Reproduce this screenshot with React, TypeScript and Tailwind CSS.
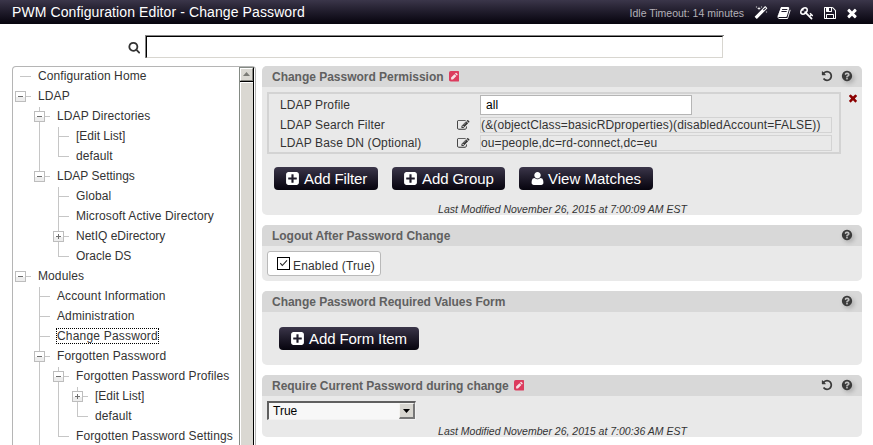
import type { ReactNode } from 'react';

const PATHS = {
  times:
    'M1490 1322q0 40-28 68l-136 136q-28 28-68 28t-68-28l-294-294-294 294q-28 28-68 28t-68-28l-136-136q-28-28-28-68t28-68l294-294-294-294q-28-28-28-68t28-68l136-136q28-28 68-28t68 28l294 294 294-294q28-28 68-28t68 28l136 136q28 28 28 68t-28 68l-294 294 294 294q28 28 28 68z',
  search:
    'M1216 832q0-185-131.5-316.5t-316.5-131.5-316.5 131.5-131.5 316.5 131.5 316.5 316.5 131.5 316.5-131.5 131.5-316.5zm512 832q0 52-38 90t-90 38q-54 0-90-38l-343-342q-179 124-399 124-143 0-273.5-55.5t-225-150-150-225-55.5-273.5 55.5-273.5 150-225 225-150 273.5-55.5 273.5 55.5 225 150 150 225 55.5 273.5q0 220-124 399l343 343q37 37 37 90z',
  help:
    'M1024 1376v-192q0-14-9-23t-23-9h-192q-14 0-23 9t-9 23v192q0 14 9 23t23 9h192q14 0 23-9t9-23zm256-672q0-88-55.5-163t-138.5-116-170-41q-243 0-371 213-15 24 8 42l132 100q7 6 19 6 16 0 25-12 53-68 86-92 34-24 86-24 48 0 85.5 26t37.5 59q0 38-20 61t-68 45q-63 28-115.5 86.5t-52.5 125.5v36q0 14 9 23t23 9h192q14 0 23-9t9-23q0-19 21.5-49.5t54.5-49.5q32-18 49-28.5t46-35 44.5-48 28-60.5 12.5-81zm384 192q0 209-103 385.5t-279.5 279.5-385.5 103-385.5-103-279.5-279.5-103-385.5 103-385.5 279.5-279.5 385.5-103 385.5 103 279.5 279.5 103 385.5z',
  plus:
    'M1408 960v-128q0-26-19-45t-45-19h-320v-320q0-26-19-45t-45-19h-128q-26 0-45 19t-19 45v320h-320q-26 0-45 19t-19 45v128q0 26 19 45t45 19h320v320q0 26 19 45t45 19h128q26 0 45-19t19-45v-320h320q26 0 45-19t19-45zm256-544v960q0 119-84.5 203.5t-203.5 84.5h-960q-119 0-203.5-84.5t-84.5-203.5v-960q0-119 84.5-203.5t203.5-84.5h960q119 0 203.5 84.5t84.5 203.5z',
  user:
    'M1600 1405q0 120-73 189.5t-194 69.5h-874q-121 0-194-69.5t-73-189.5q0-53 3.5-103.5t14-109 26.5-108.5 43-97.5 62-81 85.5-53.5 111.5-20q9 0 42 21.5t74.5 48 108 48 133.5 21.5 133.5-21.5 108-48 74.5-48 42-21.5q61 0 111.5 20t85.5 53.5 62 81 43 97.5 26.5 108.5 14 109 3.5 103.5zm-320-893q0 159-112.5 271.5t-271.5 112.5-271.5-112.5-112.5-271.5 112.5-271.5 271.5-112.5 271.5 112.5 112.5 271.5z',
  undo:
    'M1664 896q0 156-61 298t-164 245-245 164-298 61q-172 0-327-72.5t-264-204.5q-7-10-6.5-22.5t8.5-20.5l137-138q10-9 25-9 16 2 23 12 73 95 179 147t225 52q104 0 198.5-40.5t163.5-109.5 109.5-163.5 40.5-198.5-40.5-198.5-109.5-163.5-163.5-109.5-198.5-40.5q-98 0-188 35.5t-160 101.5l137 138q31 30 14 69-17 40-59 40h-448q-26 0-45-19t-19-45v-448q0-42 40-59 39-17 69 14l130 129q107-101 244.5-156.5t284.5-55.5q156 0 298 61t245 164 164 245 61 298z',
  save:
    'M512 1536h768v-384h-768v384zm896 0h128v-896q0-14-10-38.5t-20-34.5l-281-281q-10-10-34-20t-39-10v416q0 40-28 68t-68 28h-576q-40 0-68-28t-28-68v-416h-128v1280h128v-416q0-40 28-68t68-28h832q40 0 68 28t28 68v416zm-384-928v-320q0-13-9.5-22.5t-22.5-9.5h-192q-13 0-22.5 9.5t-9.5 22.5v320q0 13 9.5 22.5t22.5 9.5h192q13 0 22.5-9.5t9.5-22.5zm640 32v928q0 40-28 68t-68 28h-1344q-40 0-68-28t-28-68v-1344q0-40 28-68t68-28h928q40 0 88 20t76 48l280 280q28 28 48 76t20 88z',
  edit:
    'M888 1184l116-116-152-152-116 116v56h96v96h56zm440-720q-16-16-33 1l-350 350q-17 17-1 33t33-1l350-350q17-17 1-33zm80 594v190q0 119-84.5 203.5t-203.5 84.5h-832q-119 0-203.5-84.5t-84.5-203.5v-832q0-119 84.5-203.5t203.5-84.5h832q63 0 117 25 15 7 18 23 3 17-9 29l-49 49q-14 14-32 8-23-6-45-6h-832q-66 0-113 47t-47 113v832q0 66 47 113t113 47h832q66 0 113-47t47-113v-126q0-13 9-22l64-64q15-15 35-7t20 29zm-96-738l288 288-672 672h-288v-288zm444 132l-92 92-288-288 92-92q28-28 68-28t68 28l152 152q28 28 28 68t-28 68z',
  book:
    'M1703 478q40 57 18 129l-275 906q-19 64-76.5 107.5t-122.5 43.5h-923q-77 0-148.5-53.5t-99.5-131.5q-24-67-2-127 0-4 3-27t4-37q1-8-3-21.5t-3-19.5q2-11 8-21t16.5-23.5 16.5-23.5q23-38 45-91.5t30-91.5q3-10 .5-30t-.5-28q3-11 17-28t17-23q21-36 42-92t25-90q1-9-2.5-32t.5-28q4-13 22-30.5t22-22.5q19-26 42.5-84.5t27.5-96.5q1-8-3-25.5t-2-26.5q2-8 9-18t18-23 17-21q8-12 16.5-30.5t15-35 16-36 19.5-32 26.5-23.5 36-11.5 47.5 5.5l-1 3q38-9 51-9h761q74 0 114 56t18 130l-274 906q-36 119-71.5 153.5t-128.5 34.5h-869q-27 0-38 15-11 16-1 43 24 70 144 70h923q29 0 56-15.5t35-41.5l300-987q7-22 5-57 38 15 59 43zm-1064 2q-4 13 2 22.5t20 9.5h608q13 0 25.5-9.5t16.5-22.5l21-64q4-13-2-22.5t-20-9.5h-608q-13 0-25.5 9.5t-16.5 22.5zm-83 256q-4 13 2 22.5t20 9.5h608q13 0 25.5-9.5t16.5-22.5l21-64q4-13-2-22.5t-20-9.5h-608q-13 0-25.5 9.5t-16.5 22.5z',
  magic:
    'M1254 581l293-293-107-107-293 293zm447-293q0 27-18 45l-1286 1286q-18 18-45 18t-45-18l-198-198q-18-18-18-45t18-45l1286-1286q18-18 45-18t45 18l198 198q18 18 18 45zm-1351-190l98 30-98 30-30 98-30-98-98-30 98-30 30-98zm350 162l196 60-196 60-60 196-60-196-196-60 196-60 60-196zm930 478l98 30-98 30-30 98-30-98-98-30 98-30 30-98zm-640-640l98 30-98 30-30 98-30-98-98-30 98-30 30-98z',
  key:
    'M832 512q0-80-56-136t-136-56-136 56-56 136q0 42 19 83-41-19-83-19-80 0-136 56t-56 136 56 136 136 56 136-56 56-136q0-42-19-83 41 19 83 19 80 0 136-56t56-136zm851 704q0 17-49 66t-66 49q-9 0-28.5-16t-36.5-33-38.5-40-24.5-26l-96 96 220 220q28 28 28 68 0 42-39 81t-81 39q-40 0-68-28l-671-671q-176 131-365 131-163 0-265.5-102.5t-102.5-265.5q0-160 95-313t248-248 313-95q163 0 265.5 102.5t102.5 265.5q0 189-131 365l355 355 96-96q-3-3-26-24.5t-40-38.5-33-36.5-16-28.5q0-17 49-66t66-49q13 0 23 10 6 6 46 44.5t82 79.5 86.5 86 73 78 28.5 41z',
};

function Icon({ name, className }: { name: keyof typeof PATHS; className: string }) {
  return (
    <svg viewBox="0 0 1792 1792" fill="currentColor" className={`shrink-0 ${className}`}>
      <path d={PATHS[name]} />
    </svg>
  );
}

/** Red rounded square with a light pencil: the setting differs from its default. */
function ModifiedIcon() {
  return (
    <svg viewBox="0 0 10 10" className="ml-[5px] size-[10.5px] shrink-0">
      <rect width="10" height="10" rx="1.6" fill="#dc3c5e" />
      <path d="M2 8V6.2L5.2 3 7 4.8 3.8 8zM5.7 2.5l.6-.6q.4-.3.8 0l1 1q.3.4 0 .8l-.6.6z" fill="#f6dfe4" />
    </svg>
  );
}

type Node = { label: string; guides: string; box?: '+' | '-'; selected?: boolean; tight?: boolean };

// guides, one letter per level: "|" passing line, "T" branch, "L" last branch, "-" no vertical, " " empty
const TREE: Node[] = [
  { label: 'Configuration Home', guides: '-' },
  { label: 'LDAP', guides: '-', box: '-' },
  { label: 'LDAP Directories', guides: ' T', box: '-' },
  { label: '[Edit List]', guides: ' |T', tight: true },
  { label: 'default', guides: ' |L' },
  { label: 'LDAP Settings', guides: ' L', box: '-', tight: true },
  { label: 'Global', guides: '  T' },
  { label: 'Microsoft Active Directory', guides: '  T' },
  { label: 'NetIQ eDirectory', guides: '  T', box: '+', tight: true },
  { label: 'Oracle DS', guides: '  L', tight: true },
  { label: 'Modules', guides: '-', box: '-' },
  { label: 'Account Information', guides: ' T' },
  { label: 'Administration', guides: ' T' },
  { label: 'Change Password', guides: ' T', selected: true },
  { label: 'Forgotten Password', guides: ' T', box: '-' },
  { label: 'Forgotten Password Profiles', guides: ' |T', box: '-' },
  { label: '[Edit List]', guides: ' ||T', box: '+', tight: true },
  { label: 'default', guides: ' ||L' },
  { label: 'Forgotten Password Settings', guides: ' |L' },
];

function Guide({ kind, box }: { kind: string; box?: '+' | '-' }) {
  return (
    <svg viewBox="0 0 19 20" className="h-5 w-[19px] shrink-0" shapeRendering="crispEdges">
      {(kind === '|' || kind === 'T') && <rect x="7" y="0" width="1" height="20" fill="#c6c6c6" />}
      {kind === 'L' && <rect x="7" y="0" width="1" height="10" fill="#c6c6c6" />}
      {(kind === 'T' || kind === 'L' || kind === '-') && <rect x="7" y="9" width="11" height="1" fill="#c6c6c6" />}
      {box && (
        <g>
          <rect x="2" y="4" width="11" height="11" fill="#bdbdbd" />
          <rect x="3" y="5" width="9" height="9" fill="#ffffff" />
          <rect x="3" y="10" width="9" height="4" fill="#ededed" />
          <rect x="5" y="9" width="5" height="1" fill="#6e6e6e" />
          {box === '+' && <rect x="7" y="7" width="1" height="5" fill="#6e6e6e" />}
        </g>
      )}
    </svg>
  );
}

function TreeRow({ node }: { node: Node }) {
  const levels = node.guides.split('');
  return (
    <div className="flex h-5 shrink-0 whitespace-nowrap">
      {levels.map((kind, i) => (
        <Guide key={i} kind={kind} box={i === levels.length - 1 ? node.box : undefined} />
      ))}
      <span
        className={
          node.selected
            ? 'mt-px -mr-px ml-[5px] h-4 border border-dotted border-black leading-[15px] tracking-[0.19px]'
            : node.tight
              ? 'ml-[6px] leading-[18px]'
              : 'ml-[6px] leading-[18px] tracking-[0.1px]'
        }
      >
        {node.label}
      </span>
    </div>
  );
}

function Scrollbar() {
  return (
    <div className="mr-px flex w-[15px] shrink-0 flex-col border-r border-l border-r-black border-l-[#848a84] bg-[#dad8d2]">
      <div className="flex h-[15px] shrink-0 flex-col border-t border-b border-t-[#848a84] border-b-black">
        <div className="flex flex-1 items-center justify-center border border-t-white border-r-[#8a8a84] border-b-[#8a8a84] border-l-white">
          <svg viewBox="0 0 7 4" className="mb-px h-1 w-[7px]">
            <path d="M3.5 0L7 4H0z" fill="#7b7b76" />
          </svg>
        </div>
      </div>
      <div className="flex-1 border-t border-l border-white" />
    </div>
  );
}

function Panel({
  title,
  modified,
  height,
  children,
}: {
  title: string;
  modified?: boolean;
  height: string;
  children: ReactNode;
}) {
  return (
    <section className={`flex w-[600px] shrink-0 flex-col overflow-hidden rounded-[5px] bg-[#e9e9e9] ${height}`}>
      <header className="flex h-[21px] shrink-0 items-center bg-[#d8d8d8] pr-[9px] pl-[10px]">
        <h2 className="text-[12px] font-bold tracking-[-0.02px] text-[#606060]">{title}</h2>
        {modified && <ModifiedIcon />}
        <div className="mb-px ml-auto flex items-center gap-2 text-[#3b3b3b]">
          {modified && <Icon name="undo" className="size-3" />}
          <Icon name="help" className="size-3 drop-shadow-[2px_2px_2px_rgba(0,0,0,0.25)]" />
        </div>
      </header>
      {children}
    </section>
  );
}

function Button({ icon, children, className }: { icon: 'plus' | 'user'; children: string; className: string }) {
  return (
    <button
      className={`flex h-[23px] shrink-0 items-center rounded-[4px] bg-linear-to-b from-[#3b364a] to-[#07050e] pl-[11px] text-[15px] whitespace-nowrap text-white ${className}`}
    >
      <Icon name={icon} className="size-[15px]" />
      <span className={`pt-[2px] ${icon === 'user' ? 'ml-[3px]' : 'ml-1 tracking-[-0.1px]'}`}>{children}</span>
    </button>
  );
}

function Modified({ children }: { children: string }) {
  return <p className="pl-px text-center text-[10.5px] leading-3 text-[#333] italic">{children}</p>;
}

export default function App() {
  return (
    <div className="flex h-[445px] w-[873px] flex-col overflow-hidden bg-white font-['Liberation_Sans',Arial,sans-serif] text-[12px] text-[#333]">
      <header className="flex h-6 shrink-0 items-center bg-linear-to-b from-[#3b364a] to-[#07050e] pr-[14px] pl-3 text-white">
        <h1 className="text-[14px] tracking-[0.1px]">PWM Configuration Editor - Change Password</h1>
        <span className="mt-[3px] ml-auto text-[10.5px] text-[#b3b1b8]">Idle Timeout: 14 minutes</span>
        <div className="mt-[2px] ml-[10px] flex items-center gap-[9px]">
          <Icon name="magic" className="size-[14px]" />
          <Icon name="book" className="size-[14px]" />
          <Icon name="key" className="size-[14px]" />
          <Icon name="save" className="size-[14px]" />
          <Icon name="times" className="-ml-px size-[14px]" />
        </div>
      </header>

      <div className="flex h-[42px] shrink-0 pt-[11px] pl-[127.5px]">
        <Icon name="search" className="mt-[6px] mr-[5px] size-[12.5px]" />
        <div className="flex h-[23px] w-[579px] border-t border-l border-[#848484]">
          <div className="h-[22px] w-[577px] border border-t-black border-r-[#d8d6d0] border-b-[#d8d6d0] border-l-black" />
        </div>
      </div>

      <div className="flex min-h-0 flex-1">
        <nav className="ml-3 flex w-[244px] shrink-0 overflow-hidden rounded-t-[4px] border border-b-0 border-[#b5b5b5]">
          <div className="flex min-w-0 flex-1 flex-col overflow-hidden">
            {TREE.map((node, i) => (
              <TreeRow key={i} node={node} />
            ))}
          </div>
          <Scrollbar />
        </nav>

        <main className="ml-[6px] flex flex-col gap-[10px]">
          <Panel title="Change Password Permission" modified height="h-[149px]">
            <div className="flex pt-[5px] pl-[5px]">
              <div className="grid h-[62px] w-[574px] grid-cols-[177px_23px_1fr] grid-rows-[20px_18px_18px] border-2 border-[#d3d3d3] pt-px pl-[11px] tracking-[0.13px] [&>*]:whitespace-nowrap">
                <span className="leading-5">LDAP Profile</span>
                <span />
                <div className="flex h-5 w-[212px] items-center border border-[#b5b5b5] bg-white pl-[5px] text-black">all</div>
                <span className="leading-5">LDAP Search Filter</span>
                <Icon name="edit" className="mt-1 size-[12.5px]" />
                <div className="mt-[2px] h-4 w-[352px] border border-[#d3d3d3] leading-[15px]">
                  (&amp;(objectClass=basicRDproperties)(disabledAccount=FALSE))
                </div>
                <span className="leading-5">LDAP Base DN (Optional)</span>
                <Icon name="edit" className="mt-1 size-[12.5px]" />
                <div className="mt-[2px] h-4 w-[352px] border border-[#d3d3d3] leading-[15px]">
                  ou=people,dc=rd-connect,dc=eu
                </div>
              </div>
              <Icon name="times" className="ml-[6px] size-3 text-[#8b0000]" />
            </div>
            <div className="mt-[13px] flex gap-[14px] pl-3">
              <Button icon="plus" className="w-[104px]">Add Filter</Button>
              <Button icon="plus" className="w-[113px]">Add Group</Button>
              <Button icon="user" className="w-[134px]">View Matches</Button>
            </div>
            <div className="mt-[13px]">
              <Modified>Last Modified November 26, 2015 at 7:00:09 AM EST</Modified>
            </div>
          </Panel>

          <Panel title="Logout After Password Change" height="h-[56px]">
            <div className="mt-[5px] ml-[5px] flex h-[25px] w-[114px] rounded-[3px] border border-[#b9b9b9] bg-white pl-[9px]">
              <svg viewBox="0 0 13 13" className="mt-[5px] size-[13px] shrink-0">
                <rect x=".5" y=".5" width="12" height="12" fill="#fff" stroke="#000" />
                <path d="M3.3 6.2L5.3 8.5 10 3.4" fill="none" stroke="#222" strokeWidth="1.1" />
              </svg>
              <span className="mt-[6px] ml-[3px] leading-4 tracking-[0.17px] whitespace-nowrap">Enabled (True)</span>
            </div>
          </Panel>

          <Panel title="Change Password Required Values Form" height="h-[74px]">
            <div className="mt-[15px] pl-[17px]">
              <Button icon="plus" className="w-[140px]">Add Form Item</Button>
            </div>
          </Panel>

          <Panel title="Require Current Password during change" modified height="h-[62px]">
            <div className="mt-[5px] ml-[5px] flex h-[19px] w-[149px] shrink-0 border-t-2 border-r border-b border-l-2 border-t-[#5f5f5f] border-r-[#f2f2f2] border-b-[#f2f2f2] border-l-[#5f5f5f] bg-[#f7f7f7] pl-1 leading-4 text-black">
              <span>True</span>
              <span className="ml-auto flex h-4 w-4 items-center justify-center border border-t-[#f4f3f0] border-r-2 border-r-[#777] border-b-2 border-b-[#777] border-l-[#f4f3f0] bg-[#d8d6d0]">
                <svg viewBox="0 0 7 4" className="h-1 w-[7px]">
                  <path d="M0 0h7L3.5 4z" />
                </svg>
              </span>
            </div>
            <div className="mt-[5px]">
              <Modified>Last Modified November 26, 2015 at 7:00:36 AM EST</Modified>
            </div>
          </Panel>
        </main>
      </div>
    </div>
  );
}
